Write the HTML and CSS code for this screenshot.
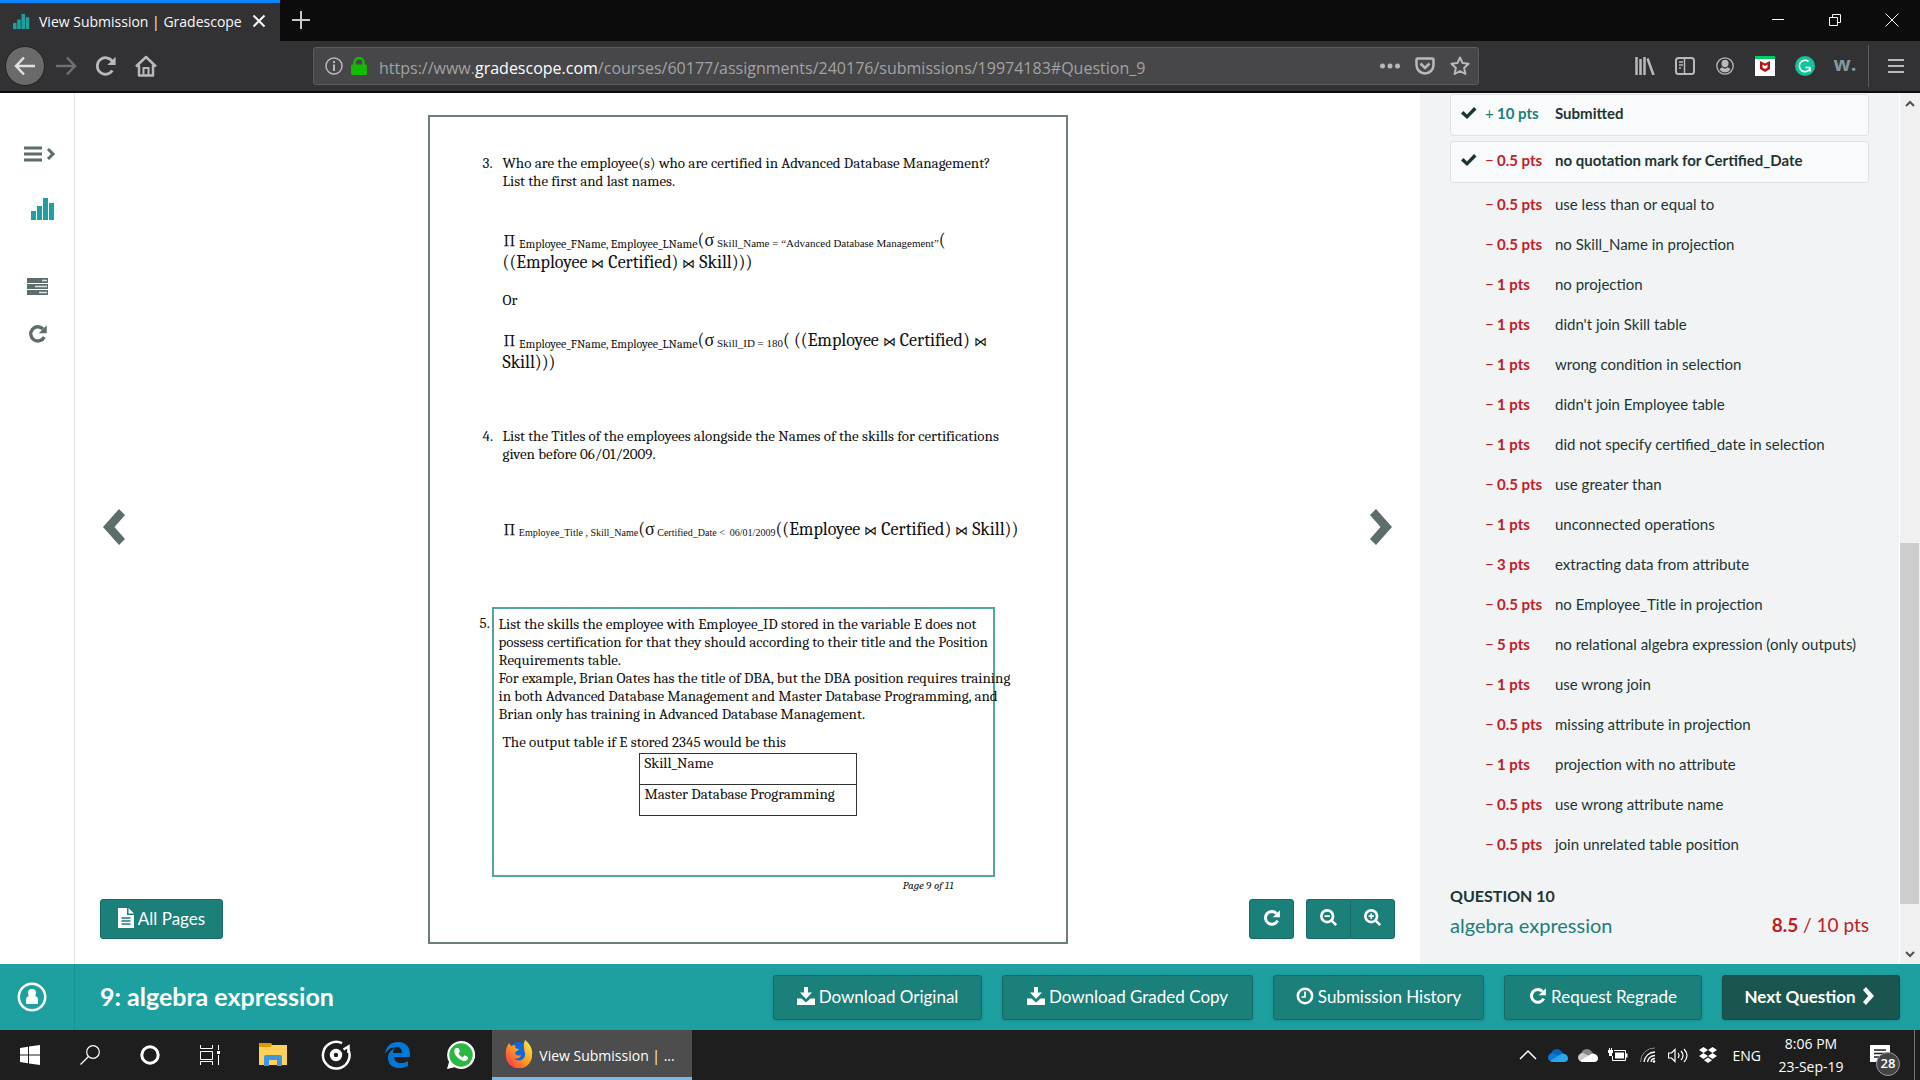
FILE: index.html
```
<!DOCTYPE html>
<html lang="en">
<head>
<meta charset="utf-8">
<title>View Submission | Gradescope</title>
<link rel="stylesheet" href="styles.css">
</head>
<body>
<svg class="defs" aria-hidden="true">
  <symbol id="bars" viewBox="0 0 24 22"><path d="M0 13h5v9H0zM6 8h5v14H6zM12 0h5v22h-5zM18 5h5v17h-5z"/></symbol>
  <symbol id="redo" viewBox="0 0 24 24"><path d="M19.500 15.500A8.500 8.500 0 1 1 18 6" fill="none" stroke="currentColor" stroke-width="4"/><path d="M22.500 1.500v9.500H13z"/></symbol>
  <symbol id="reload" viewBox="0 0 24 24"><path d="M19 17a9 9 0 1 1 0-10" fill="none" stroke="currentColor" stroke-width="3"/><path d="M22.500 2v9H13.500z"/></symbol>
  <symbol id="chevron" viewBox="0 0 24 36"><path d="M2 6l6-6 16 18L8 36l-6-6 10.500-12z"/></symbol>
  <symbol id="check" viewBox="0 0 16 14"><path d="M0 7.500l2.500-2.500L6 8.500 13 1l2.500 2.500L6 13z"/></symbol>
  <symbol id="download" viewBox="0 0 18 18"><path d="M7 0h4v5.500h4L9 12 3 5.500h4zM0 11.500h4.500L9 15.500l4.500-4H18V18H0z"/></symbol>
  <symbol id="magnify" viewBox="0 0 20 20"><circle cx="8" cy="8" r="6.500" fill="none" stroke="currentColor" stroke-width="3"/><path d="M12 14l2-2 5 5-2 2zM5 7h6v2H5z"/></symbol>
</svg>

<div class="screen">
  <header class="tabs">
    <div class="tab">
      <svg class="fav" viewBox="0 0 24 22"><use href="#bars"/></svg>
      <span class="tab-title">View Submission | Gradescope</span>
      <button class="bare tab-x" aria-label="Close tab"><svg width="14" height="14" viewBox="0 0 14 14"><path d="M1.500 1.500l11 11M12.500 1.500l-11 11" stroke="currentColor" stroke-width="2"/></svg></button>
    </div>
    <button class="bare new-tab" aria-label="New tab"><svg width="18" height="18" viewBox="0 0 18 18"><path d="M9 0v18M0 9h18" stroke="currentColor" stroke-width="2"/></svg></button>
    <div class="window-buttons">
      <button class="bare" aria-label="Minimize"><svg width="14" height="14" viewBox="0 0 14 14"><path d="M1 6.500h12" stroke="currentColor"/></svg></button>
      <button class="bare" aria-label="Restore"><svg width="14" height="14" viewBox="0 0 14 14"><path d="M1.500 4.500h8v8h-8zM4.500 4.500v-3h8v8h-3" fill="none" stroke="currentColor"/></svg></button>
      <button class="bare" aria-label="Close"><svg width="14" height="14" viewBox="0 0 14 14"><path d="M.5.5l13 13M13.500.5l-13 13" stroke="currentColor"/></svg></button>
    </div>
  </header>

  <nav class="toolbar" aria-label="Browser">
    <div class="nav-buttons">
      <button class="bare back" aria-label="Back"><svg width="22" height="20" viewBox="0 0 22 20"><path d="M21 10H2M10 1.500L2 10l8 8.500" fill="none" stroke="currentColor" stroke-width="2.500"/></svg></button>
      <button class="bare forward" aria-label="Forward"><svg width="22" height="20" viewBox="0 0 22 20"><path d="M1 10h19M12 1.500l8 8.500-8 8.500" fill="none" stroke="currentColor" stroke-width="2.500"/></svg></button>
      <button class="bare" aria-label="Reload"><svg width="22" height="22" fill="currentColor"><use href="#reload"/></svg></button>
      <button class="bare" aria-label="Home"><svg width="22" height="22" viewBox="0 0 22 22"><path d="M1 11.500L11 2l10 9.500M4 10v10.500h14V10" fill="none" stroke="currentColor" stroke-width="2.500" stroke-linejoin="round"/><path d="M8.500 20v-7h5v7" fill="none" stroke="currentColor" stroke-width="2"/></svg></button>
    </div>
    <div class="address">
      <svg width="18" height="18" viewBox="0 0 18 18"><circle cx="9" cy="9" r="8" fill="none" stroke="currentColor" stroke-width="1.500"/><path d="M8 4h2v2H8zM8 7.500h2V14H8z" fill="currentColor"/></svg>
      <svg class="lock" width="16" height="18" viewBox="0 0 16 18"><path d="M3.500 9V5.500a4.500 4.500 0 0 1 9 0V9" fill="none" stroke="#12bc00" stroke-width="2.500"/><rect y="7.500" width="16" height="10.500" rx="1.500" fill="#12bc00"/></svg>
      <a class="url" href="#Question_9">https://www.<b>gradescope.com</b>/courses/60177/assignments/240176/submissions/19974183#Question_9</a>
      <button class="bare" aria-label="Page actions"><svg width="20" height="6" viewBox="0 0 20 6" fill="currentColor"><circle cx="2.500" cy="3" r="2.500"/><circle cx="10" cy="3" r="2.500"/><circle cx="17.500" cy="3" r="2.500"/></svg></button>
      <button class="bare" aria-label="Save to Pocket"><svg width="20" height="18" viewBox="0 0 20 18"><path d="M2.500 1.500h15a1 1 0 0 1 1 1V8a8.500 8.500 0 0 1-17 0V2.500a1 1 0 0 1 1-1zM5.500 6.500L10 11l4.500-4.500" fill="none" stroke="currentColor" stroke-width="2.500"/></svg></button>
      <button class="bare" aria-label="Bookmark"><svg width="20" height="20" viewBox="0 0 20 20"><path d="M10 1.500l2.600 5.600 6 .7-4.500 4.100 1.300 6.100L10 15l-5.400 3 1.300-6.100-4.500-4.100 6-.7z" fill="none" stroke="currentColor" stroke-width="2" stroke-linejoin="round"/></svg></button>
    </div>
    <div class="extensions">
      <button class="bare" aria-label="Library"><svg width="20" height="18" viewBox="0 0 20 18"><path d="M1.500 0v18M5.500 2v16M9.500 0v18M12.500 1.500L18.500 18" stroke="currentColor" stroke-width="2.500"/></svg></button>
      <button class="bare" aria-label="Sidebars"><svg width="20" height="18" viewBox="0 0 20 18"><rect x="1" y="1" width="18" height="16" rx="2.500" fill="none" stroke="currentColor" stroke-width="2"/><path d="M9.500 1v16M4 5h4M4 8h4M4 11h2" stroke="currentColor" stroke-width="1.500"/></svg></button>
      <button class="bare" aria-label="Account"><svg width="18" height="18" viewBox="0 0 18 18"><circle cx="9" cy="9" r="8.200" fill="none" stroke="currentColor" stroke-width="1.300"/><ellipse cx="9" cy="6.500" rx="3.500" ry="3.800" fill="currentColor"/><path d="M3.500 12l2.700-1.800a4 4 0 0 0 5.600 0L14.500 12a6.200 6.200 0 0 1-11 0z" fill="currentColor"/></svg></button>
      <button class="bare" aria-label="McAfee"><svg width="20" height="20" viewBox="0 0 20 20"><path fill="#fff" d="M0 0h20v20H0z"/><path fill="#0c6" d="M0 0h20v3H0z"/><path fill="#b81418" d="M5 5l5 2.500L15 5v8l-5 3-5-3zM7.500 8.500v3L10 13l2.500-1.500v-3L10 10z" fill-rule="evenodd"/></svg></button>
      <button class="bare" aria-label="Grammarly"><svg width="20" height="20" viewBox="0 0 20 20"><circle cx="10" cy="10" r="10" fill="#15c39a"/><path d="M13.500 5.500A5.700 5.700 0 1 0 14.500 13.500M10.500 11.500h4.500v4" fill="none" stroke="#fff" stroke-width="1.600"/></svg></button>
      <button class="bare w-mark" aria-label="W">w.</button>
    </div>
    <button class="bare menu" aria-label="Menu"><svg width="16" height="16" viewBox="0 0 16 16"><path d="M0 2h16M0 8h16M0 14h16" stroke="currentColor" stroke-width="2"/></svg></button>
  </nav>

  <main class="work">
    <nav class="rail" aria-label="Course">
      <button class="bare" aria-label="Expand menu"><svg width="32" height="16" viewBox="0 0 32 16"><path d="M0 2h18M0 8h18M0 14h18" stroke="currentColor" stroke-width="3"/><path d="M24 3l5 5-5 5" fill="none" stroke="currentColor" stroke-width="3"/></svg></button>
      <a class="brand" href="#" aria-label="Gradescope"><svg width="24" height="22" fill="currentColor"><use href="#bars"/></svg></a>
      <a class="rail-list" href="#" aria-label="Assignments"><svg width="21" height="17" viewBox="0 0 21 17"><path d="M0 0h21v5H0zM0 6h21v5H0zM0 12h21v5H0z" fill="currentColor"/><path d="M15 2.500h5M8 8.500h12M12 14.500h8" stroke="#dde3e2" stroke-width="1.500"/></svg></a>
      <a href="#" aria-label="Regrade requests"><svg width="20" height="20" fill="currentColor"><use href="#redo"/></svg></a>
    </nav>

    <section class="viewer">
      <div class="viewer-side">
        <button class="bare turn" aria-label="Previous page"><svg class="flip" width="24" height="36" fill="currentColor"><use href="#chevron"/></svg></button>
        <button class="btn small"><svg width="16" height="20" viewBox="0 0 16 20"><path fill="#fff" d="M0 0h9v7h7v13H0zM10.500 0L16 5.500h-5.500z"/><path d="M3.500 10h9M3.500 13h9M3.500 16h9" stroke="#1b7f7a" stroke-width="1.500"/></svg>All Pages</button>
      </div>

      <article class="paper">
        <div class="question">
          <span class="num">3.</span>
          <p>Who are the employee(s) who are certified in Advanced Database Management?<br>List the first and last names.</p>
        </div>
        <p class="algebra first"><span class="product">∏</span><sub> Employee_FName, Employee_LName</sub>(σ<sub class="fine"> Skill_Name = “Advanced Database Management”</sub>(<br>((Employee <span class="join">⋈</span> Certified) <span class="join">⋈</span> Skill)))</p>
        <p class="or">Or</p>
        <p class="algebra"><span class="product">∏</span><sub> Employee_FName, Employee_LName</sub>(σ<sub class="fine"> Skill_ID = 180</sub>( ((Employee <span class="join">⋈</span> Certified) <span class="join">⋈</span><br>Skill)))</p>
        <div class="question fourth">
          <span class="num">4.</span>
          <p>List the Titles of the employees alongside the Names of the skills for certifications<br>given before 06/01/2009.</p>
        </div>
        <p class="algebra single"><span class="product">∏</span><sub class="fine"> Employee_Title , Skill_Name</sub>(σ<sub class="fine"> Certified_Date &lt;&nbsp; 06/01/2009</sub>((Employee <span class="join">⋈</span> Certified) <span class="join">⋈</span> Skill))</p>
        <div class="marked-row">
          <span class="num">5.</span>
          <div class="marked">
            <p>List the skills the employee with Employee_ID stored in the variable E does not<br>possess certification for that they should according to their title and the Position<br>Requirements table.<br>For example, Brian Oates has the title of DBA, but the DBA position requires training<br>in both Advanced Database Management and Master Database Programming, and<br>Brian only has training in Advanced Database Management.</p>
            <p class="output">The output table if E stored 2345 would be this</p>
            <table class="result">
              <tr><th>Skill_Name</th></tr>
              <tr><td>Master Database Programming</td></tr>
            </table>
          </div>
        </div>
        <p class="page-no"><i>Page</i> 9 <i>of 11</i></p>
      </article>

      <div class="viewer-side right">
        <button class="bare turn" aria-label="Next page"><svg width="24" height="36" fill="currentColor"><use href="#chevron"/></svg></button>
        <div class="zoomers">
          <button class="btn icon" aria-label="Rotate"><svg width="18" height="18" fill="currentColor"><use href="#redo"/></svg></button>
          <div class="pair">
            <button class="btn icon" aria-label="Zoom out"><svg width="18" height="18" fill="currentColor"><use href="#magnify"/></svg></button>
            <button class="btn icon" aria-label="Zoom in"><svg width="18" height="18" viewBox="0 0 20 20" fill="currentColor"><use href="#magnify" width="20" height="20"/><path d="M7 5h2v6H7z"/></svg></button>
          </div>
        </div>
      </div>
    </section>

    <aside class="grades">
      <ul class="rubric">
        <li class="applied"><svg width="16" height="14"><use href="#check"/></svg><span class="pts plus"><span class="sign">+</span>10 pts</span><span>Submitted</span></li>
        <li class="applied"><svg width="16" height="14"><use href="#check"/></svg><span class="pts"><span class="sign">−</span>0.5 pts</span><span>no quotation mark for Certified_Date</span></li>
        <li><span class="pts"><span class="sign">−</span>0.5 pts</span><span>use less than or equal to</span></li>
        <li><span class="pts"><span class="sign">−</span>0.5 pts</span><span>no Skill_Name in projection</span></li>
        <li><span class="pts"><span class="sign">−</span>1 pts</span><span>no projection</span></li>
        <li><span class="pts"><span class="sign">−</span>1 pts</span><span>didn't join Skill table</span></li>
        <li><span class="pts"><span class="sign">−</span>1 pts</span><span>wrong condition in selection</span></li>
        <li><span class="pts"><span class="sign">−</span>1 pts</span><span>didn't join Employee table</span></li>
        <li><span class="pts"><span class="sign">−</span>1 pts</span><span>did not specify certified_date in selection</span></li>
        <li><span class="pts"><span class="sign">−</span>0.5 pts</span><span>use greater than</span></li>
        <li><span class="pts"><span class="sign">−</span>1 pts</span><span>unconnected operations</span></li>
        <li><span class="pts"><span class="sign">−</span>3 pts</span><span>extracting data from attribute</span></li>
        <li><span class="pts"><span class="sign">−</span>0.5 pts</span><span>no Employee_Title in projection</span></li>
        <li><span class="pts"><span class="sign">−</span>5 pts</span><span>no relational algebra expression (only outputs)</span></li>
        <li><span class="pts"><span class="sign">−</span>1 pts</span><span>use wrong join</span></li>
        <li><span class="pts"><span class="sign">−</span>0.5 pts</span><span>missing attribute in projection</span></li>
        <li><span class="pts"><span class="sign">−</span>1 pts</span><span>projection with no attribute</span></li>
        <li><span class="pts"><span class="sign">−</span>0.5 pts</span><span>use wrong attribute name</span></li>
        <li><span class="pts"><span class="sign">−</span>0.5 pts</span><span>join unrelated table position</span></li>
      </ul>
      <h2>QUESTION 10</h2>
      <div class="score"><a href="#Question_10">algebra expression</a><span class="total"><b>8.5</b> / 10 pts</span></div>
    </aside>
    <div class="scrollbar" aria-hidden="true">
      <svg width="10" height="7" viewBox="0 0 10 7"><path d="M1 6l4-4 4 4" fill="none" stroke="#505050" stroke-width="2"/></svg>
      <span class="track"></span><span class="thumb"></span><span class="tail"></span>
      <svg width="10" height="7" viewBox="0 0 10 7"><path d="M1 1l4 4 4-4" fill="none" stroke="#505050" stroke-width="2"/></svg>
    </div>
  </main>

  <footer class="actions">
    <a class="account" href="#" aria-label="Account"><svg width="30" height="30" viewBox="0 0 30 30"><circle cx="15" cy="15" r="13.200" fill="none" stroke="#fff" stroke-width="2.500"/><circle cx="15" cy="11" r="4" fill="#fff"/><path fill="#fff" d="M9 21v-3q0-4 4-4h4q4 0 4 4v3q0 1-1 1H10q-1 0-1-1z"/></svg></a>
    <h1>9: algebra expression</h1>
    <div class="action-list">
      <button class="btn w-original"><svg width="18" height="18" fill="currentColor"><use href="#download"/></svg>Download Original</button>
      <button class="btn w-copy"><svg width="18" height="18" fill="currentColor"><use href="#download"/></svg>Download Graded Copy</button>
      <button class="btn w-history"><svg width="18" height="18" viewBox="0 0 18 18"><path d="M9 4.500V10H5.500" fill="none" stroke="currentColor" stroke-width="1.700"/><circle cx="9" cy="9" r="7.200" fill="none" stroke="currentColor" stroke-width="2.500"/></svg>Submission History</button>
      <button class="btn w-regrade"><svg width="18" height="18" fill="currentColor"><use href="#redo"/></svg>Request Regrade</button>
      <button class="btn next">Next Question<svg width="12" height="18" fill="currentColor"><use href="#chevron"/></svg></button>
    </div>
  </footer>

  <nav class="taskbar" aria-label="Taskbar">
    <div class="launchers">
      <button class="bare" aria-label="Start"><svg width="20" height="20" viewBox="0 0 20 20" fill="#fff"><path d="M0 3l8-1.200V9.500H0zM9 1.600L20 0v9.500H9zM0 10.500h8v7.700L0 17zM9 10.500h11V20L9 18.400z"/></svg></button>
      <button class="bare" aria-label="Search"><svg width="20" height="20" viewBox="0 0 20 20"><circle cx="13" cy="7" r="6.300" fill="none" stroke="#fff" stroke-width="1.200"/><path d="M8.500 11.500L.5 19.500" stroke="#fff" stroke-width="1.200"/></svg></button>
      <button class="bare" aria-label="Cortana"><svg width="20" height="20" viewBox="0 0 20 20"><circle cx="10" cy="10" r="8.200" fill="none" stroke="#fff" stroke-width="3"/></svg></button>
      <button class="bare" aria-label="Task view"><svg width="20" height="20" viewBox="0 0 20 20"><path d="M.5 0v3.500h12V0M.5 20v-3.500h12V20M.5 6.500h12v8H.5zM18.500 0v5M18.500 10v10" fill="none" stroke="#fff"/><path d="M17 6h3v3h-3z" fill="#fff"/></svg></button>
      <button class="bare" aria-label="File Explorer"><svg width="28" height="24" viewBox="0 0 28 24"><path fill="#e09a00" d="M0 0h12l2 3v4H0z"/><path fill="#ffd257" d="M0 4h11l2-2h15v20H0z"/><path fill="#3b97e3" d="M5 23v-9q0-2 2-2h14q2 0 2 2v9h-5v-6h-8v6z"/></svg></button>
      <button class="bare" aria-label="Groove Music"><svg width="30" height="30" viewBox="0 0 30 30"><path d="M21 3.200A13.300 13.300 0 1 0 27.500 10" fill="none" stroke="#fff" stroke-width="2.500"/><circle cx="15" cy="15" r="4.200" fill="none" stroke="#fff" stroke-width="4"/><path d="M27.500 13V6.500l-5 3" fill="none" stroke="#fff" stroke-width="2.500"/></svg></button>
      <button class="bare" aria-label="Edge"><svg width="26" height="26" viewBox="0 0 26 26"><path fill="#0078d7" d="M0 12C1 4 6 0 13 0c8 0 12 5 12 12v3H9c0 6 8 8 14 4v5c-10 5-20 1-20-8 0-5 3-8 7-10-2 2-2 4-2 5h9c0-5-3-6-6-6-5 0-9 3-11 7z"/></svg></button>
      <button class="bare" aria-label="WhatsApp"><svg width="28" height="28" viewBox="0 0 28 28"><path fill="#fff" d="M14 0a14 14 0 1 1-6.500 26.300L0 28l2-7A14 14 0 0 1 14 0z"/><circle cx="14" cy="14" r="11.700" fill="#2bb741"/><path fill="#fff" d="M9 7h2.500l1.500 3.500-1.500 2c1 2 2.500 3 4.300 3.800l1.700-2 3.500 1.700c.5 3-2.500 4.500-4.500 4-5-1.500-9-6-9.300-9.500 0-1.500.8-3 1.800-3.500z"/></svg></button>
    </div>
    <button class="bare running"><svg width="28" height="28" viewBox="0 0 28 28"><defs><linearGradient id="fire" x1="1" y1="0" x2="0" y2="1"><stop offset="0" stop-color="#fff44f"/><stop offset=".5" stop-color="#ff9a1f"/><stop offset="1" stop-color="#ff2255"/></linearGradient></defs><circle cx="14" cy="13" r="11" fill="#1367d6"/><path fill="url(#fire)" d="M20 0c5 4 8 9 7 15a13 13 0 0 1-26 1C0 10 2 6 4 3l2 3 4-1c0 3 1 4 4 4-1 2-3 2-4 4 1 3 4 3 6 2-1 4-5 4-7 3 4 5 12 2 11-5-1-4-2-8 0-13z"/></svg><span>View Submission | ...</span></button>
    <div class="tray">
      <div class="tray-icons">
        <svg viewBox="0 0 20 20"><path d="M2 14l8-8 8 8" fill="none" stroke="#fff" stroke-width="1.500"/></svg>
        <svg viewBox="0 0 20 20"><path fill="#0364b8" d="M3 9a6 6 0 0 1 11-2l4 4-9 3z"/><path fill="#0f78d4" d="M0 12q1-4 5-4l8 4-9 4.500Q0 16 0 12z"/><path fill="#28a8ea" d="M2 16L13 9q6-1 7 4 0 4-4 4H5q-2 0-3-1z"/></svg>
        <svg viewBox="0 0 20 20"><path fill="#888" d="M3 9a6 6 0 0 1 11-2l4 4-9 3z"/><path fill="#ccc" d="M0 12q1-4 5-4l8 4-9 4.500Q0 16 0 12z"/><path fill="#fff" d="M2 16L13 9q6-1 7 4 0 4-4 4H5q-2 0-3-1z"/></svg>
        <svg viewBox="0 0 20 20"><path d="M6 5.500h11.500v10h-13V11" fill="none" stroke="#fff"/><path fill="#fff" d="M7 7.500h9v6H7zM18 8.500h1.500v4H18zM0 5h5v3H4v3H1V8H0zM1 3h1v2H1zM3 3h1v2H3z"/></svg>
        <svg viewBox="0 0 20 20"><path d="M2.500 17A14 14 0 0 1 17 3" fill="none" stroke="#888"/><path d="M6 17A11 11 0 0 1 17 7M9.500 17A7.500 7.500 0 0 1 17 10.500M13 17a4 4 0 0 1 4-3.500" fill="none" stroke="#fff" stroke-width="1.300"/><circle cx="16" cy="16.500" r="1.300" fill="#fff"/></svg>
        <svg viewBox="0 0 20 20"><path d="M.5 8h3L7 4.500v12L3.500 13h-3zM10 8q2 2.500 0 5M13 6q4 4.500 0 9M16 4q6 6.500 0 13" fill="none" stroke="#fff" stroke-width="1.200"/></svg>
        <svg viewBox="0 0 20 20"><path fill="#fff" d="M5.500 2L10 5 5.500 8 1 5zM14.500 2L19 5l-4.500 3L10 5zM5.500 8L10 11l-4.500 3L1 11zM14.500 8l4.500 3-4.500 3-4.500-3zM10 12.500l4 2.700-4 2.800-4-2.800z"/></svg>
      </div>
      <span class="lang">ENG</span>
      <time class="clock"><span>8:06 PM</span><span>23-Sep-19</span></time>
      <button class="bare notices" aria-label="Notifications"><svg width="20" height="20" viewBox="0 0 20 20"><path fill="#fff" d="M0 0h20v17h-9v3l-3-3H0z"/><path d="M4 5h12M4 8.500h12M4 12h7" stroke="#1e1e1e" stroke-width="1.500"/></svg><span class="badge">28</span></button>
    </div>
  </nav>
</div>
</body>
</html>
```
FILE: styles.css
```
* { box-sizing: border-box; }
body { margin: 0; font-family: Lato, "Liberation Sans", sans-serif; color: #1c3533; }
p, h1, h2, ul { margin: 0; padding: 0; }
a { color: inherit; text-decoration: none; }
svg { display: block; flex: none; }
.defs { position: absolute; width: 0; height: 0; }
.bare { border: 0; padding: 0; background: none; color: inherit; font: inherit; display: flex; align-items: center; justify-content: center; }
.screen { min-height: 100vh; display: grid; grid-template-rows: 41px 52px 1fr 66px 50px; overflow: hidden; }

/* Browser chrome */
.tabs { display: flex; background: #0c0c0d; color: #f9f9fa; font-family: "Open Sans", sans-serif; font-size: 14px; }
.tab { width: 280px; display: flex; align-items: center; gap: 9px; padding: 0 14px 2px 13px; background: #323234; border-top: 3px solid #0a84ff; }
.fav { width: 17px; height: 17px; fill: #1ea0a0; }
.tab-title { flex: 1; white-space: nowrap; }
.new-tab { width: 42px; padding-bottom: 2px; color: #c8c8c9; }
.window-buttons { margin-left: auto; display: flex; }
.window-buttons .bare { width: 57px; padding-bottom: 2px; }
.toolbar { display: flex; align-items: center; background: #323234; color: #b9b9ba; border-bottom: 2px solid #0c0c0d; font-family: "Open Sans", sans-serif; }
.nav-buttons { width: 313px; display: flex; padding-left: 5px; }
.nav-buttons .bare { width: 40px; height: 40px; }
.nav-buttons .back { margin-right: 1px; background: #6a6a6b; border: 1px solid #222224; border-radius: 50%; color: #e0e0e1; }
.nav-buttons .forward { color: #707072; }
.address { flex: 1; height: 38px; display: flex; align-items: center; gap: 15px; padding: 0 8px 0 11px; background: #474749; border: 1px solid #5c5c5e; border-radius: 3px; }
.lock { margin-left: -7px; }
.url { flex: 1; margin-left: -3px; padding-top: 3px; color: #a2a2a4; font-size: 16px; white-space: nowrap; }
.url b { color: #fff; font-weight: 400; }
.extensions { width: 390px; display: flex; justify-content: flex-end; height: 42px; padding-right: 3px; border-right: 1px solid #5c5c5e; }
.extensions .bare { width: 40px; }
.extensions .w-mark { color: #8597a0; font: 700 20px "Open Sans", sans-serif; padding-bottom: 6px; }
.menu { width: 51px; padding-left: 2px; }

/* Work area */
.work { display: flex; min-height: 0; background: #fff; }
.rail { width: 75px; display: flex; flex-direction: column; align-items: flex-start; padding: 53px 0 0 24px; border-right: 1px solid #e3e5e6; color: #5d6d6b; }
.brand { margin: 36px 0 0 7px; color: #1ea0a0; }
.rail-list { margin: 58px 0 29px 3px; }
.rail a:last-child { margin-left: 4px; }
.viewer { flex: 1; display: grid; grid-template-columns: 1fr 640px 1fr; padding: 22px 25px 20px; }
.viewer-side { display: flex; flex-direction: column; justify-content: space-between; align-items: flex-start; padding: 394px 0 5px; }
.viewer-side.right { align-items: flex-end; }
.turn { width: 30px; height: 36px; color: #5d6d6b; }
.flip { transform: scaleX(-1); }
.btn { height: 45px; display: inline-flex; align-items: center; justify-content: center; gap: 4px; padding: 0 0 2px; background: #1b7f7a; color: #fff; border: 1px solid #186a66; border-radius: 3px; font: 17px Lato, "Liberation Sans", sans-serif; white-space: nowrap; }
.small { width: 123px; height: 40px; }
.icon { width: 45px; height: 40px; }
.zoomers, .pair { display: flex; }
.zoomers { gap: 12px; }
.pair .icon:first-child { width: 44px; border-radius: 3px 0 0 3px; border-right: 0; }
.pair .icon:last-child { border-radius: 0 3px 3px 0; }

.paper { min-height: 829px; padding: 37px 54px 0 53px; border: 2px solid #6b7f7d; color: #111; font: 15px/18px Cambria, Caladea, "Liberation Serif", serif; white-space: nowrap; }
.question { display: flex; }
.num { width: 20px; flex: none; }
.algebra { padding-left: 20px; font-size: 18px; line-height: 22px; }
.algebra sub { font-size: 12px; line-height: 0; vertical-align: -2px; }
.algebra .fine { font-family: "Liberation Serif", serif; font-size: 11px; vertical-align: -1px; }
.algebra.single .fine { font-size: 10px; }
.product { font-size: 17px; line-height: 0; }
.join { font-size: 13px; line-height: 0; }
.first { margin-top: 40px; }
.or { padding-left: 20px; margin: 17px 0 21px; }
.fourth { margin-top: 53px; }
.single { margin-top: 56px; }
.marked-row { display: flex; margin-top: 66px; }
.marked-row .num { width: 9px; padding-top: 7px; text-indent: -3px; }
.marked { flex: none; width: 503px; height: 270px; padding: 6px 0 0 5px; border: 2px solid #55a59f; }
.output { padding: 10px 0 0 4px; }
.result { margin: 2px 0 0 140px; width: 218px; border-collapse: collapse; }
.result th, .result td { height: 31px; padding: 0 5px; border: 1px solid #333; font-weight: 400; text-align: left; vertical-align: top; }
.page-no { width: 471px; text-align: right; font-size: 11px; }

/* Grades panel */
.grades { width: 479px; padding: 1px 30px 0; background: #f1f3f5; }
.rubric { list-style: none; font-size: 15px; line-height: 20px; }
.rubric li { display: flex; align-items: center; height: 40px; padding-left: 35px; white-space: nowrap; }
.rubric .applied { height: 42px; margin-bottom: 5px; padding: 0 0 4px 10px; gap: 8px; background: #f9fafc; border: 1px solid #dde2ea; border-radius: 3px; font-weight: 700; fill: #1c3533; }
.rubric .applied + .applied { margin-bottom: 1px; }
.pts { width: 70px; flex: none; color: #c02026; font-weight: 700; }
.rubric .applied .pts { margin-right: -8px; }
.rubric .plus { color: #1b7f7a; }
.sign { display: inline-block; width: 12px; font-weight: 400; }
.grades h2 { margin-top: 22px; font-size: 16px; line-height: 20px; font-weight: 700; }
.score { display: flex; justify-content: space-between; margin-top: 7px; font-size: 20px; line-height: 24px; color: #c02026; }
.score a { color: #1b7f7a; }
.total { font-size: 19px; }
.scrollbar { width: 21px; display: grid; grid-template-rows: 20px 430px 361px 1fr 20px; justify-items: stretch; align-items: center; background: #f0f0f0; border-left: 1px solid #fff; }
.scrollbar svg { justify-self: center; }
.thumb { height: 100%; margin-right: 1px; background: #cdcdcd; }

/* Submission actions */
.actions { display: flex; align-items: center; background: #1ea0a0; padding-right: 20px; }
.account { width: 75px; align-self: stretch; display: flex; align-items: center; padding-left: 17px; border-right: 1px solid #1b9291; }
.actions h1 { margin-left: 25px; padding-bottom: 3px; color: #fff; font-size: 25px; line-height: 28px; font-weight: 700; }
.action-list { margin-left: auto; display: flex; gap: 20px; }
.action-list .btn { box-shadow: 0 1px 3px #1778788c; }
.w-original { width: 209px; }
.w-copy { width: 251px; }
.w-history { width: 211px; }
.w-regrade { width: 198px; }
.action-list .next { width: 178px; padding-right: 4px; background: #1b554f; border-color: #184a45; font-weight: 700; gap: 6px; }

/* Taskbar */
.taskbar { display: flex; background: #1e1e1e; color: #fff; font-family: "Open Sans", sans-serif; font-size: 14px; }
.launchers { display: grid; grid-template-columns: 60px 60px 60px 60px 66px 60px 64px 62px; width: 492px; }
.running { width: 200px; gap: 6px; padding-right: 4px; background: #4d4d4d; border-bottom: 3px solid #76b9ed; white-space: nowrap; }
.running span { padding-top: 3px; }
.tray { margin-left: auto; display: flex; align-items: center; padding-right: 5px; }
.tray-icons { display: flex; gap: 10px; }
.tray-icons svg { width: 20px; height: 20px; }
.lang { width: 43px; text-align: right; }
.clock { width: 100px; display: flex; flex-direction: column; align-items: center; line-height: 23px; }
.notices { position: relative; width: 54px; height: 50px; padding-right: 16px; border-right: 1px solid #777; }
.badge { position: absolute; left: 15px; top: 22px; width: 24px; height: 24px; border: 1px solid #999; border-radius: 50%; background: #444; font-size: 13px; line-height: 21px; text-align: center; font-weight: 600; }
```
